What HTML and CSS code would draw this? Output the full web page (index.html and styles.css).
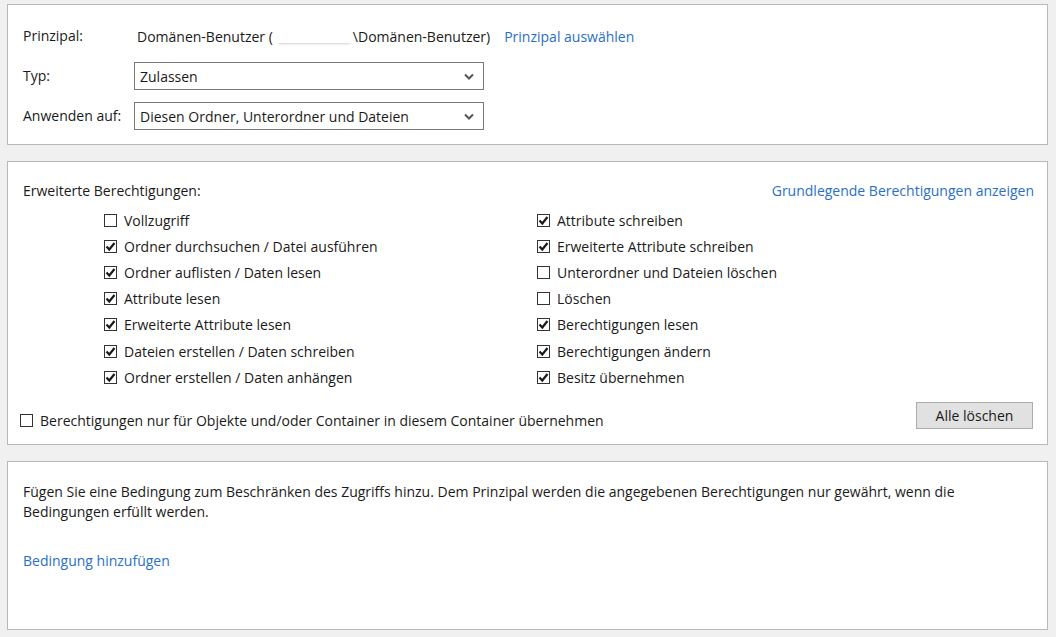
FILE: index.html
```html
<!DOCTYPE html>
<html lang="de">
<head>
<meta charset="utf-8">
<link rel="stylesheet" href="styles.css">
</head>
<body>
<div class="page">
  <section class="panel panel-principal">
    <div class="form-grid">
      <div class="lbl">Prinzipal:</div>
      <div class="principal">
        <span>Domänen-Benutzer (</span><span class="redact"></span><span>\Domänen-Benutzer)</span>
        <a class="link principal-link">Prinzipal auswählen</a>
      </div>
      <div class="lbl">Typ:</div>
      <div class="select"><span>Zulassen</span><svg class="chev" width="10" height="7" viewBox="0 0 10 7"><polyline points="1,1.5 5,5.5 9,1.5" fill="none" stroke="#555" stroke-width="2"/></svg></div>
      <div class="lbl">Anwenden auf:</div>
      <div class="select"><span>Diesen Ordner, Unterordner und Dateien</span><svg class="chev" width="10" height="7" viewBox="0 0 10 7"><polyline points="1,1.5 5,5.5 9,1.5" fill="none" stroke="#555" stroke-width="2"/></svg></div>
    </div>
  </section>

  <section class="panel panel-perms">
    <div class="perms-head">
      <span>Erweiterte Berechtigungen:</span>
      <a class="link">Grundlegende Berechtigungen anzeigen</a>
    </div>
    <div class="perm-grid">
      <div class="perm-col">
        <label class="cb"><span class="box"></span>Vollzugriff</label>
        <label class="cb"><span class="box on"><svg width="11" height="11" viewBox="0 0 11 11"><polyline points="1.5,5.5 4.3,8.5 9.5,2" fill="none" stroke="#1a1a1a" stroke-width="2.2"/></svg></span>Ordner durchsuchen / Datei ausführen</label>
        <label class="cb"><span class="box on"><svg width="11" height="11" viewBox="0 0 11 11"><polyline points="1.5,5.5 4.3,8.5 9.5,2" fill="none" stroke="#1a1a1a" stroke-width="2.2"/></svg></span>Ordner auflisten / Daten lesen</label>
        <label class="cb"><span class="box on"><svg width="11" height="11" viewBox="0 0 11 11"><polyline points="1.5,5.5 4.3,8.5 9.5,2" fill="none" stroke="#1a1a1a" stroke-width="2.2"/></svg></span>Attribute lesen</label>
        <label class="cb"><span class="box on"><svg width="11" height="11" viewBox="0 0 11 11"><polyline points="1.5,5.5 4.3,8.5 9.5,2" fill="none" stroke="#1a1a1a" stroke-width="2.2"/></svg></span>Erweiterte Attribute lesen</label>
        <label class="cb"><span class="box on"><svg width="11" height="11" viewBox="0 0 11 11"><polyline points="1.5,5.5 4.3,8.5 9.5,2" fill="none" stroke="#1a1a1a" stroke-width="2.2"/></svg></span>Dateien erstellen / Daten schreiben</label>
        <label class="cb"><span class="box on"><svg width="11" height="11" viewBox="0 0 11 11"><polyline points="1.5,5.5 4.3,8.5 9.5,2" fill="none" stroke="#1a1a1a" stroke-width="2.2"/></svg></span>Ordner erstellen / Daten anhängen</label>
      </div>
      <div class="perm-col">
        <label class="cb"><span class="box on"><svg width="11" height="11" viewBox="0 0 11 11"><polyline points="1.5,5.5 4.3,8.5 9.5,2" fill="none" stroke="#1a1a1a" stroke-width="2.2"/></svg></span>Attribute schreiben</label>
        <label class="cb"><span class="box on"><svg width="11" height="11" viewBox="0 0 11 11"><polyline points="1.5,5.5 4.3,8.5 9.5,2" fill="none" stroke="#1a1a1a" stroke-width="2.2"/></svg></span>Erweiterte Attribute schreiben</label>
        <label class="cb"><span class="box"></span>Unterordner und Dateien löschen</label>
        <label class="cb"><span class="box"></span>Löschen</label>
        <label class="cb"><span class="box on"><svg width="11" height="11" viewBox="0 0 11 11"><polyline points="1.5,5.5 4.3,8.5 9.5,2" fill="none" stroke="#1a1a1a" stroke-width="2.2"/></svg></span>Berechtigungen lesen</label>
        <label class="cb"><span class="box on"><svg width="11" height="11" viewBox="0 0 11 11"><polyline points="1.5,5.5 4.3,8.5 9.5,2" fill="none" stroke="#1a1a1a" stroke-width="2.2"/></svg></span>Berechtigungen ändern</label>
        <label class="cb"><span class="box on"><svg width="11" height="11" viewBox="0 0 11 11"><polyline points="1.5,5.5 4.3,8.5 9.5,2" fill="none" stroke="#1a1a1a" stroke-width="2.2"/></svg></span>Besitz übernehmen</label>
      </div>
    </div>
    <div class="perms-foot">
      <label class="cb"><span class="box"></span>Berechtigungen nur für Objekte und/oder Container in diesem Container übernehmen</label>
      <button class="btn">Alle löschen</button>
    </div>
  </section>

  <section class="panel panel-cond">
    <p class="cond-text">Fügen Sie eine Bedingung zum Beschränken des Zugriffs hinzu. Dem Prinzipal werden die angegebenen Berechtigungen nur gewährt, wenn die Bedingungen erfüllt werden.</p>
    <a class="link cond-link">Bedingung hinzufügen</a>
  </section>
</div>
</body>
</html>
```
FILE: styles.css
```css
* { box-sizing: border-box; }
html, body { margin: 0; padding: 0; }
body {
  background: #f0f0f0;
  font-family: "Open Sans", "Noto Sans", sans-serif;
  font-size: 14px;
  color: #1a1a1a;
  width: 1056px;
  height: 637px;
  overflow: hidden;
}
.page {
  padding: 4px 8px 0 7px;
  display: flex;
  flex-direction: column;
  gap: 16px;
}
.panel {
  background: #fff;
  border: 1px solid #b8b8b8;
}
.link { color: #2a6fc6; cursor: pointer; }

/* panel 1 */
.panel-principal { height: 141px; padding: 17px 0 0 15px; }
.form-grid {
  display: grid;
  grid-template-columns: 111px 350px;
  grid-auto-rows: 28px;
  row-gap: 12px;
  align-items: center;
}
.form-grid .lbl { line-height: 28px; }
.principal { display: flex; align-items: center; white-space: nowrap; padding-left: 3px; }
.principal > * { flex: none; }
.redact {
  display: inline-block;
  width: 74px;
  height: 14px;
  margin: 0 2px 0 4px;
  box-shadow: 0 2px 2px -1px rgba(0,0,0,0.18);
}
.principal-link { margin-left: 14px; }
.select {
  height: 28px;
  border: 1px solid #7a7a7a;
  display: flex;
  align-items: center;
  justify-content: space-between;
  padding: 0 9px 0 5px;
}
.chev { display: block; }

/* panel 2 */
.panel-perms { height: 284px; padding: 19px 13px 0 15px; }
.perms-head { display: flex; justify-content: space-between; line-height: 20px; }
.perm-grid {
  display: grid;
  grid-template-columns: 433px 1fr;
  margin: 6px 0 0 81px;
}
.perm-col { display: flex; flex-direction: column; }
.cb {
  display: flex;
  align-items: center;
  height: 26.2px;
  white-space: nowrap;
}
.box {
  width: 13px;
  height: 13px;
  border: 1px solid #333;
  background: #fff;
  margin-right: 7px;
  display: flex;
  align-items: center;
  justify-content: center;
  flex: none;
}
.box svg { display: block; }
.perms-foot {
  display: flex;
  justify-content: space-between;
  align-items: center;
  margin: 12px 0 0 -3px;
}
.btn {
  font: inherit;
  color: #1a1a1a;
  width: 117px;
  height: 27px;
  background: #e1e1e1;
  border: 1px solid #adadad;
  padding: 0;
  margin-bottom: 9px;
  margin-right: 1px;
}

/* panel 3 */
.panel-cond { height: 169px; padding: 20px 15px 0 15px; }
.cond-text { margin: 0; line-height: 19.5px; max-width: 955px; }
.cond-link { display: block; margin-top: 30px; line-height: 20px; }
```
